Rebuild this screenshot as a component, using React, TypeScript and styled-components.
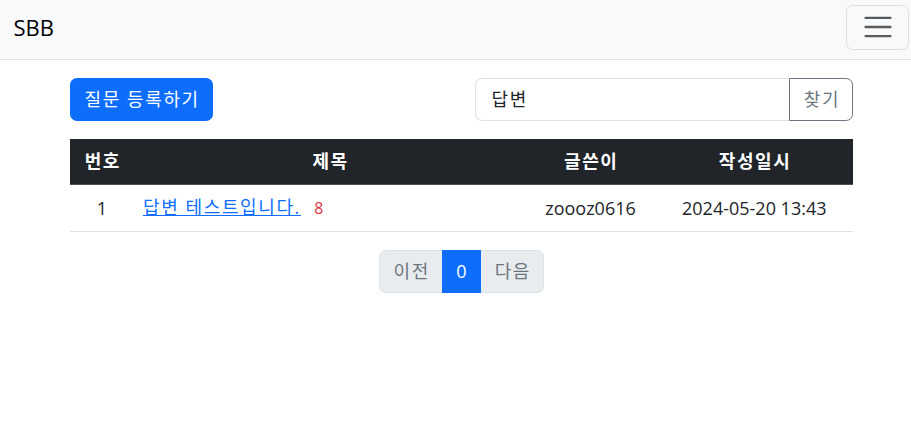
import React from 'react'
import styled, { createGlobalStyle, css } from 'styled-components'

const GlobalStyle = createGlobalStyle`
  * { box-sizing: border-box; }
  body {
    margin: 0;
    background: #fff;
    color: #212529;
    font-family: "Open Sans", "Noto Sans CJK KR", sans-serif;
    font-size: 18px;
    line-height: 1.5;
  }
`;

type Question = {
  id: number
  subject: string
  answers: number
  author: string
  createdAt: string
}

const questions: Question[] = [
  { id: 1, subject: '답변 테스트입니다.', answers: 8, author: 'zoooz0616', createdAt: '2024-05-20 13:43' },
]

const App: React.FC = () => {
  return (
    <>
      <GlobalStyle />
      <Navbar>
        <Brand href="#">SBB</Brand>
        <Toggler aria-label="Toggle navigation">
          <svg width="34" height="34" viewBox="0 0 30 30">
            <path d="M4 7h22M4 15h22M4 23h22" stroke="rgba(33,37,41,0.75)" strokeWidth="2" strokeLinecap="round" />
          </svg>
        </Toggler>
      </Navbar>

      <Container>
        <TopRow>
          <div>
            <PrimaryButton><Ko>질문 등록하기</Ko></PrimaryButton>
          </div>
          <InputGroup>
            <SearchInput type="text" defaultValue="답변" />
            <OutlineButton><Ko>찾기</Ko></OutlineButton>
          </InputGroup>
        </TopRow>

        <Table>
          <colgroup>
            <col style={{ width: 64 }} />
            <col style={{ width: '50%' }} />
            <col style={{ width: 130 }} />
            <col />
          </colgroup>
          <thead>
            <tr>
              <Th><Ko>번호</Ko></Th>
              <Th><Ko>제목</Ko></Th>
              <Th><Ko>글쓴이</Ko></Th>
              <Th><Ko>작성일시</Ko></Th>
            </tr>
          </thead>
          <tbody>
            {questions.map(q => (
              <tr key={q.id}>
                <Td>{q.id}</Td>
                <Td left>
                  <SubjectLink href="#"><Ko>{q.subject}</Ko></SubjectLink>
                  <AnswerCount>{q.answers}</AnswerCount>
                </Td>
                <Td>{q.author}</Td>
                <Td>{q.createdAt}</Td>
              </tr>
            ))}
          </tbody>
        </Table>

        <Pagination>
          <PageLink disabled first><Ko>이전</Ko></PageLink>
          <PageLink active>0</PageLink>
          <PageLink disabled last><Ko>다음</Ko></PageLink>
        </Pagination>
      </Container>
    </>
  )
}

export default App

// Hangul in the reference font runs a little wider than Noto CJK
const Ko = styled.span`
  white-space: nowrap;
  letter-spacing: 1.6px;
  margin-right: -1.6px;
`;

const Navbar = styled.nav`
  height: 60px;
  display: flex;
  align-items: center;
  justify-content: space-between;
  padding: 1px 2px 6px 13.5px;
  background-color: #f8f9fa;
  border-bottom: 1px solid #dee2e6;
`;

const Brand = styled.a`
  font-size: 22px;
  color: #000;
  text-decoration: none;
  line-height: 1.5;
`;

const Toggler = styled.button`
  width: 63px;
  height: 45px;
  padding: 0;
  display: flex;
  align-items: center;
  justify-content: center;
  background: transparent;
  border: 1px solid rgba(0, 0, 0, 0.1);
  border-radius: 6.75px;
`;

const Container = styled.main`
  width: 783px;
  margin: 0 0 0 70px;
`;

const TopRow = styled.div`
  display: grid;
  grid-template-columns: 1fr 1fr;
  column-gap: 27px;
  margin: 18px 0;
`;

const buttonBase = css`
  font-family: inherit;
  font-size: 18px;
  line-height: 27px;
  padding: 7px 13.5px;
  border-radius: 6.75px;
  white-space: nowrap;
  cursor: pointer;
`;

const PrimaryButton = styled.button`
  ${buttonBase};
  color: #fff;
  background-color: #0d6efd;
  border: 1px solid #0d6efd;
`;

const InputGroup = styled.div`
  display: flex;
`;

const SearchInput = styled.input`
  flex: 1;
  min-width: 0;
  font-family: inherit;
  font-size: 18px;
  line-height: 27px;
  letter-spacing: 1.6px;
  padding: 7px 13.5px 7px 15.5px;
  color: #212529;
  border: 1px solid #dee2e6;
  border-right: none;
  border-radius: 6.75px 0 0 6.75px;
  outline: none;
`;

const OutlineButton = styled.button`
  ${buttonBase};
  color: #6c757d;
  background: transparent;
  border: 1px solid #6c757d;
  border-radius: 0 6.75px 6.75px 0;
`;

const Table = styled.table`
  width: 100%;
  table-layout: fixed;
  border-collapse: collapse;
  margin-bottom: 18px;
`;

const Th = styled.th`
  padding: 9px;
  line-height: 27px;
  color: #fff;
  font-weight: 700;
  text-align: center;
  background-color: #212529;
  border-bottom: 1px solid #4d5154;
`;

const Td = styled.td<{ left?: boolean }>`
  padding: 9px;
  line-height: 27px;
  text-align: ${props => props.left ? 'left' : 'center'};
  white-space: nowrap;
  border-bottom: 1px solid #dee2e6;
`;

const SubjectLink = styled.a`
  color: #0d6efd;
  text-decoration: underline;
`;

const AnswerCount = styled.span`
  color: #dc3545;
  font-size: 15.75px;
  margin-left: 15px;
`;

const Pagination = styled.ul`
  display: flex;
  justify-content: center;
  list-style: none;
  margin: 0;
  padding: 0;
`;

const PageLink = styled.li<{ active?: boolean; disabled?: boolean; first?: boolean; last?: boolean }>`
  padding: 7px 13.5px;
  line-height: 27px;
  white-space: nowrap;
  border: 1px solid #dee2e6;
  margin-left: -1px;
  color: #0d6efd;
  background-color: #fff;
  ${props => props.disabled && css`
    color: #6c757d;
    background-color: #e9ecef;
  `}
  ${props => props.active && css`
    color: #fff;
    background-color: #0d6efd;
    border-color: #0d6efd;
    position: relative;
    z-index: 1;
  `}
  ${props => props.first && css`
    margin-left: 0;
    border-radius: 6.75px 0 0 6.75px;
  `}
  ${props => props.last && css`
    border-radius: 0 6.75px 6.75px 0;
  `}
`;
